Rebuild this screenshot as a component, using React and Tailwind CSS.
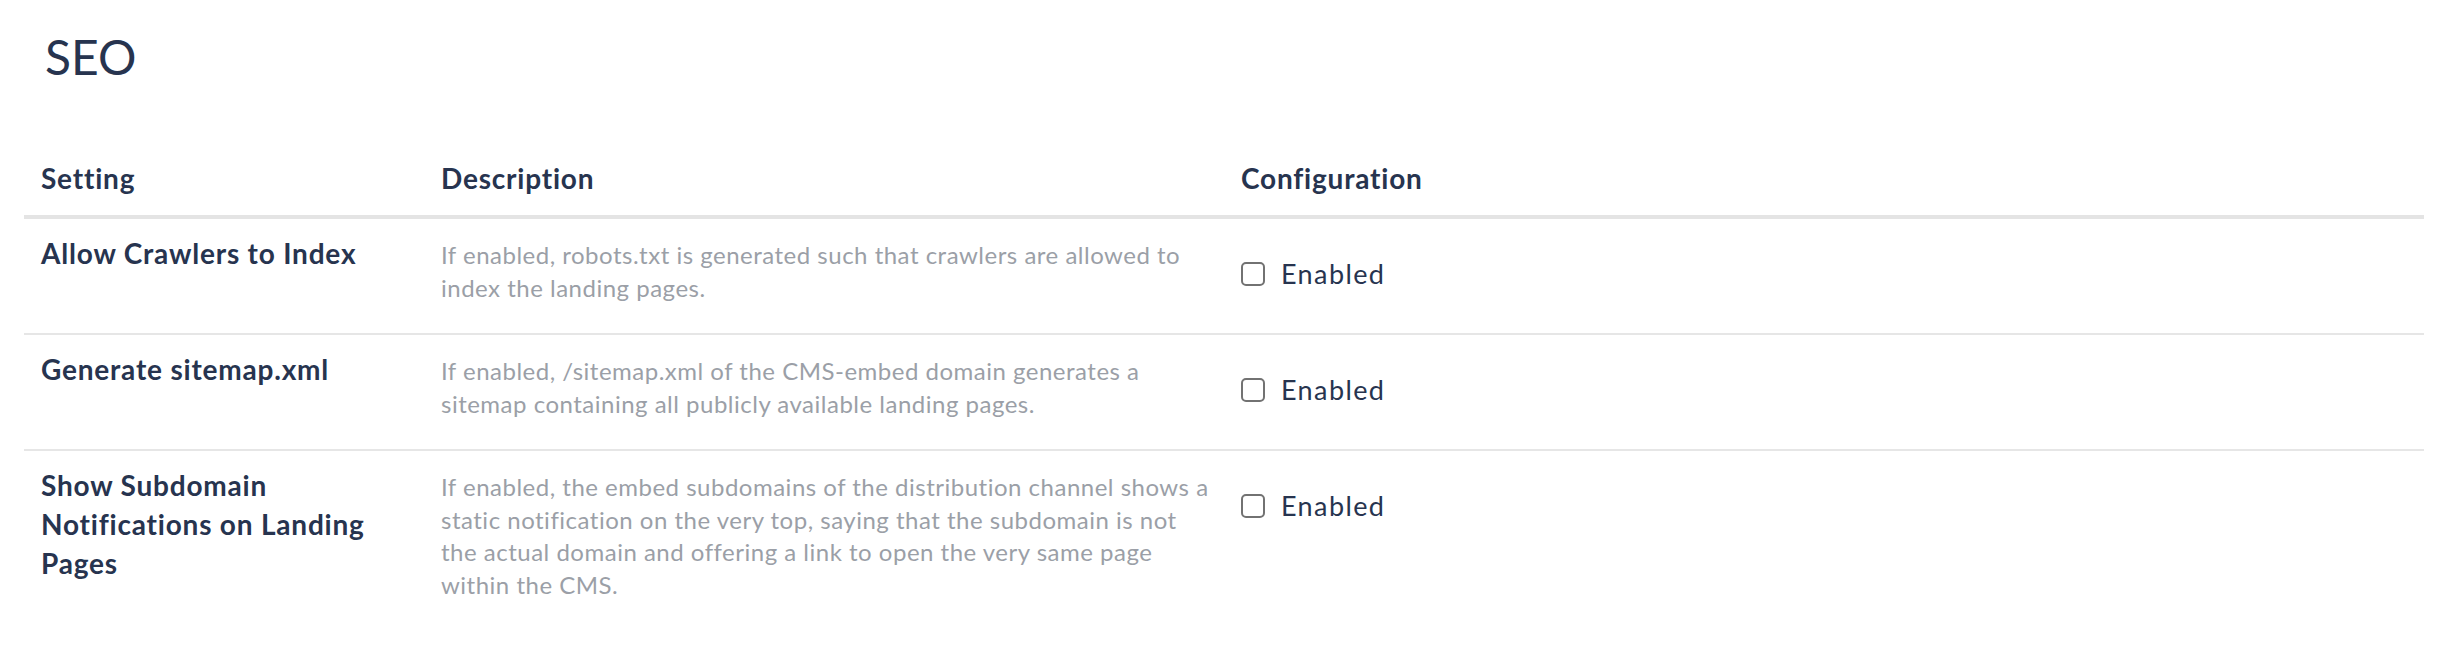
import React, { useState } from 'react';

const settings = [
  {
    id: 'crawlers',
    name: ['Allow Crawlers to Index'],
    description: [
      'If enabled, robots.txt is generated such that crawlers are allowed to',
      'index the landing pages.',
    ],
  },
  {
    id: 'sitemap',
    name: ['Generate sitemap.xml'],
    description: [
      'If enabled, /sitemap.xml of the CMS-embed domain generates a',
      'sitemap containing all publicly available landing pages.',
    ],
  },
  {
    id: 'subdomain',
    name: ['Show Subdomain', 'Notifications on Landing', 'Pages'],
    description: [
      'If enabled, the embed subdomains of the distribution channel shows a',
      'static notification on the very top, saying that the subdomain is not',
      'the actual domain and offering a link to open the very same page',
      'within the CMS.',
    ],
  },
];

const Checkbox = ({ checked, onChange }) => (
  <button
    type="button"
    onClick={onChange}
    className="w-[24px] h-[24px] rounded-[5px] border-2 border-[#727272] bg-white flex items-center justify-center shrink-0"
  >
    {checked && (
      <svg viewBox="0 0 24 24" className="w-[16px] h-[16px]" fill="none" stroke="#27344f" strokeWidth="3">
        <path d="M5 12l5 5 9-10" />
      </svg>
    )}
  </button>
);

const SettingRow = ({ setting, last }) => {
  const [enabled, setEnabled] = useState(false);

  return (
    <div
      className={`grid grid-cols-[400px_800px_1fr] ${last ? '' : 'border-b-2 border-[#e6e6e6]'}`}
    >
      <div className="px-[17px] pt-[15px] text-[28px] leading-[39px] font-bold tracking-[0.8px] text-[#27344f]">
        {setting.name.map((line, i) => (
          <div key={i} className="whitespace-nowrap">{line}</div>
        ))}
      </div>
      <div className="px-[17px] pt-[20px] pb-[29px] text-[24px] leading-[32.5px] tracking-[0.5px] text-[#9b9fa7]">
        {setting.description.map((line, i) => (
          <div key={i} className="whitespace-nowrap">{line}</div>
        ))}
      </div>
      <div className="px-[17px] pt-[37px]">
        <label className="flex items-center gap-[16px] h-[36px] cursor-pointer">
          <Checkbox checked={enabled} onChange={() => setEnabled(!enabled)} />
          <span className="text-[27px] tracking-[1.4px] text-[#27344f]">Enabled</span>
        </label>
      </div>
    </div>
  );
};

export default function App() {
  return (
    <div className="min-h-screen bg-white font-['Lato',sans-serif]">
      <h1 className="pl-[45px] pt-[28px] text-[48px] leading-[58px] font-normal text-[#27344f]">
        SEO
      </h1>

      <div className="ml-[24px] mr-[20px] mt-[57px]">
        {/* table header */}
        <div className="grid grid-cols-[400px_800px_1fr] border-b-4 border-[#e4e4e4] text-[28px] leading-[39px] font-bold tracking-[0.8px] text-[#27344f]">
          <div className="px-[17px] pt-[16px] pb-[17px]">Setting</div>
          <div className="px-[17px] pt-[16px] pb-[17px]">Description</div>
          <div className="px-[17px] pt-[16px] pb-[17px]">Configuration</div>
        </div>

        {settings.map((setting, i) => (
          <SettingRow key={setting.id} setting={setting} last={i === settings.length - 1} />
        ))}
      </div>
    </div>
  );
}
